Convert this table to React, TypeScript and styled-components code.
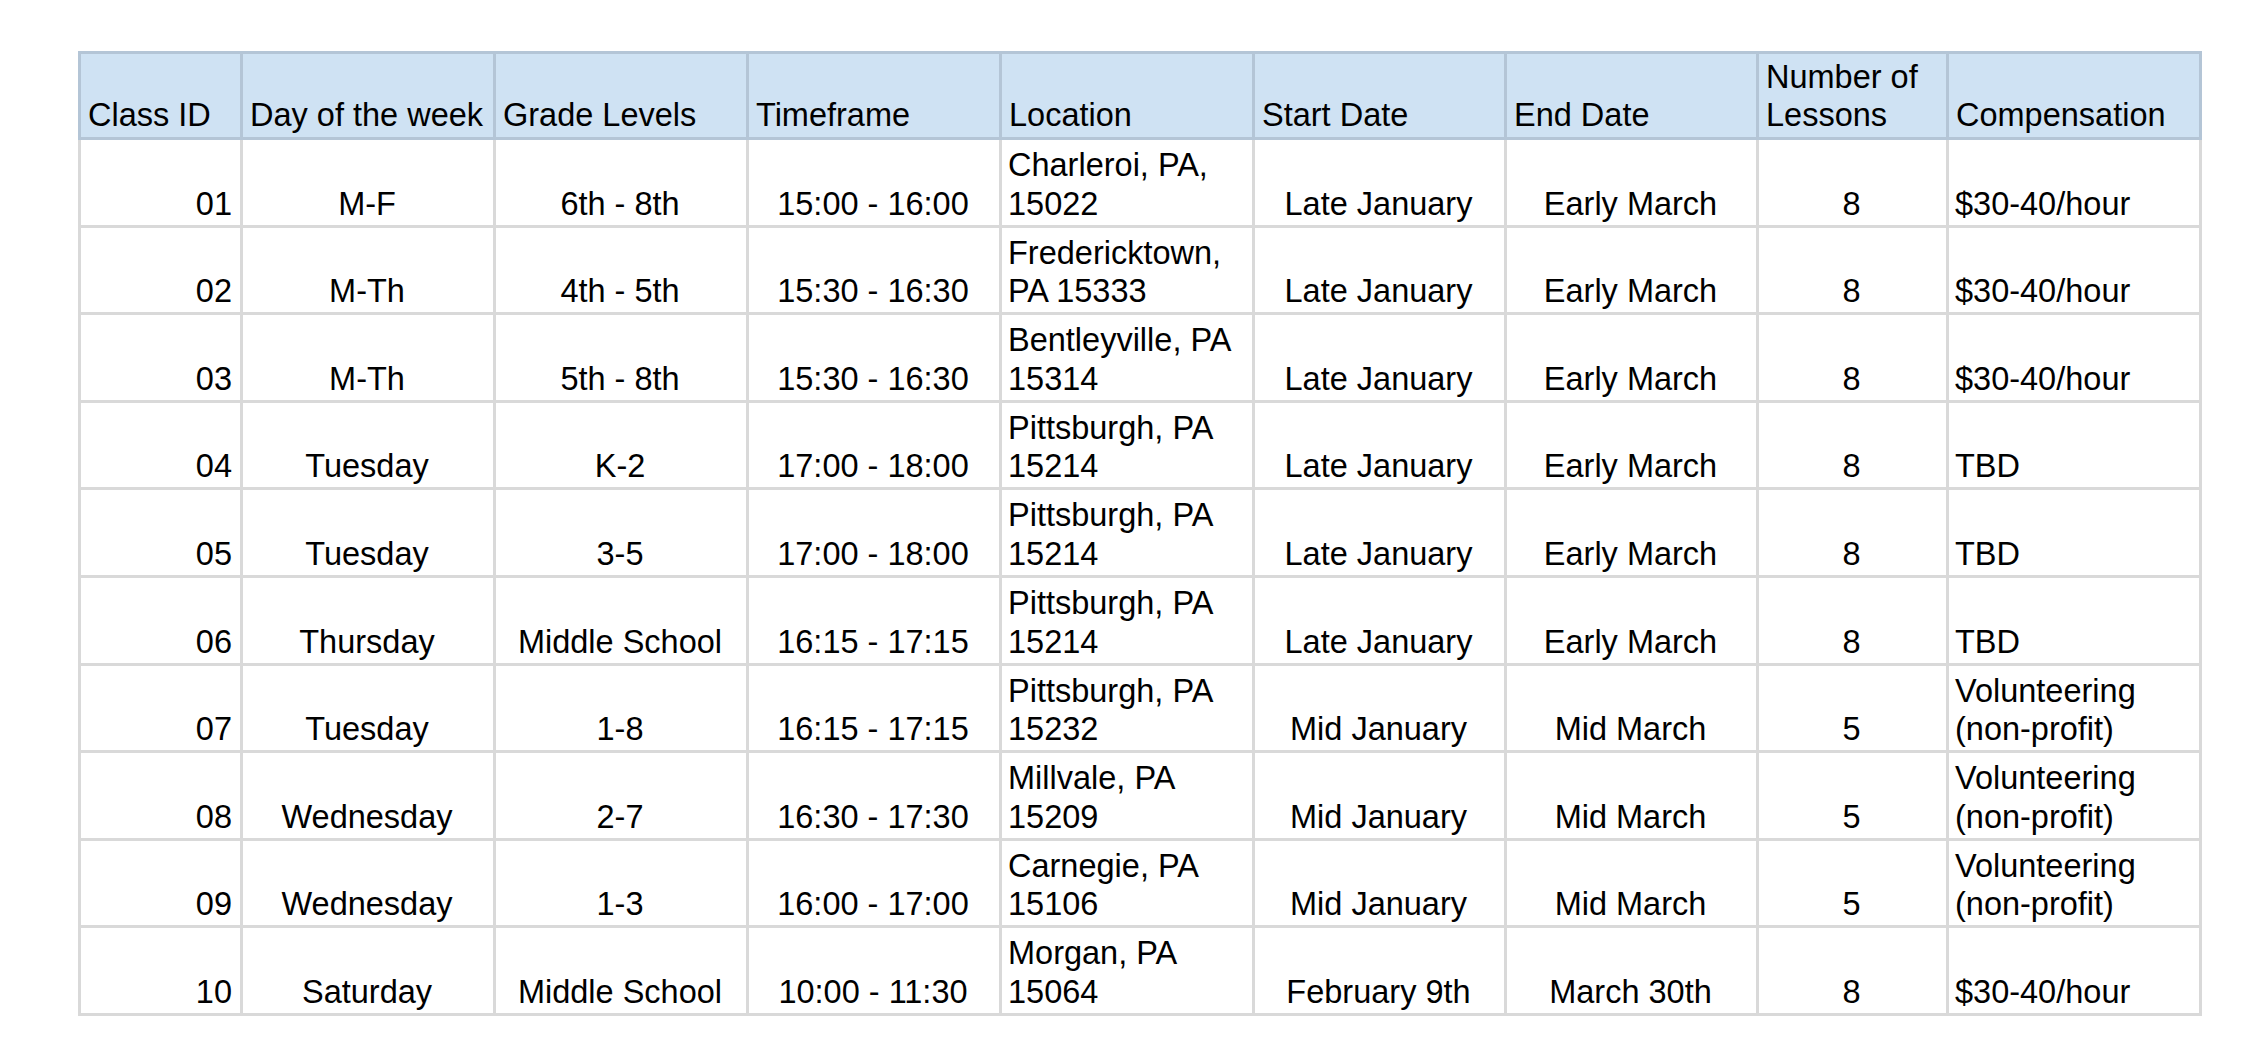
import React from 'react';
import styled, { createGlobalStyle } from 'styled-components';

const GlobalStyle = createGlobalStyle`
  html, body {
    margin: 0;
    padding: 0;
    background: #ffffff;
  }
  body {
    font-family: "Liberation Sans", Arial, sans-serif;
    color: #000000;
  }
`;

type Align = 'left' | 'center' | 'right';

interface ClassRow {
  id: string;
  day: string;
  grades: string;
  timeframe: string;
  location: string;
  start: string;
  end: string;
  lessons: number;
  pay: string;
}

const columns: { label: React.ReactNode; align: Align }[] = [
  { label: 'Class ID', align: 'right' },
  { label: 'Day of the week', align: 'center' },
  { label: 'Grade Levels', align: 'center' },
  { label: 'Timeframe', align: 'center' },
  { label: 'Location', align: 'left' },
  { label: 'Start Date', align: 'center' },
  { label: 'End Date', align: 'center' },
  { label: <>Number of<br />Lessons</>, align: 'center' },
  { label: 'Compensation', align: 'left' },
];

const rows: ClassRow[] = [
  { id: '01', day: 'M-F', grades: '6th - 8th', timeframe: '15:00 - 16:00', location: 'Charleroi, PA, 15022', start: 'Late January', end: 'Early March', lessons: 8, pay: '$30-40/hour' },
  { id: '02', day: 'M-Th', grades: '4th - 5th', timeframe: '15:30 - 16:30', location: 'Fredericktown, PA 15333', start: 'Late January', end: 'Early March', lessons: 8, pay: '$30-40/hour' },
  { id: '03', day: 'M-Th', grades: '5th - 8th', timeframe: '15:30 - 16:30', location: 'Bentleyville, PA 15314', start: 'Late January', end: 'Early March', lessons: 8, pay: '$30-40/hour' },
  { id: '04', day: 'Tuesday', grades: 'K-2', timeframe: '17:00 - 18:00', location: 'Pittsburgh, PA 15214', start: 'Late January', end: 'Early March', lessons: 8, pay: 'TBD' },
  { id: '05', day: 'Tuesday', grades: '3-5', timeframe: '17:00 - 18:00', location: 'Pittsburgh, PA 15214', start: 'Late January', end: 'Early March', lessons: 8, pay: 'TBD' },
  { id: '06', day: 'Thursday', grades: 'Middle School', timeframe: '16:15 - 17:15', location: 'Pittsburgh, PA 15214', start: 'Late January', end: 'Early March', lessons: 8, pay: 'TBD' },
  { id: '07', day: 'Tuesday', grades: '1-8', timeframe: '16:15 - 17:15', location: 'Pittsburgh, PA 15232', start: 'Mid January', end: 'Mid March', lessons: 5, pay: 'Volunteering (non-profit)' },
  { id: '08', day: 'Wednesday', grades: '2-7', timeframe: '16:30 - 17:30', location: 'Millvale, PA 15209', start: 'Mid January', end: 'Mid March', lessons: 5, pay: 'Volunteering (non-profit)' },
  { id: '09', day: 'Wednesday', grades: '1-3', timeframe: '16:00 - 17:00', location: 'Carnegie, PA 15106', start: 'Mid January', end: 'Mid March', lessons: 5, pay: 'Volunteering (non-profit)' },
  { id: '10', day: 'Saturday', grades: 'Middle School', timeframe: '10:00 - 11:30', location: 'Morgan, PA 15064', start: 'February 9th', end: 'March 30th', lessons: 8, pay: '$30-40/hour' },
];

const Page = styled.div`
  padding: 51px 0 0 78px;
`;

// column tracks include each cell's left rule; last one carries the right rule too
const Sheet = styled.div`
  display: grid;
  grid-template-columns: 162px 253px 253px 253px 253px 252px 252px 190px 256px;
  grid-template-rows: 89px repeat(10, 87.6px);
  width: max-content;
`;

const HeadCell = styled.div<{ $last?: boolean }>`
  box-sizing: border-box;
  display: flex;
  flex-direction: column;
  justify-content: flex-end;
  background: #cfe2f3;
  border-top: 3px solid #b4c5d6;
  border-bottom: 3px solid #b4c5d6;
  border-left: 3px solid #b4c5d6;
  border-right: ${p => (p.$last ? '3px solid #b4c5d6' : 'none')};
  padding: 0 2px 3.5px 7px;
  font-size: 32.5px;
  line-height: 38px;
  white-space: nowrap;
  overflow: hidden;
`;

const Cell = styled.div<{ $align: Align; $last?: boolean }>`
  box-sizing: border-box;
  display: flex;
  flex-direction: column;
  justify-content: flex-end;
  text-align: ${p => p.$align};
  border-left: 3px solid #d9d9d9;
  border-bottom: 3px solid #d9d9d9;
  border-right: ${p => (p.$last ? '3px solid #d9d9d9' : 'none')};
  padding: 0 8px 1.5px 6px;
  font-size: 32.5px;
  line-height: 38.5px;
  overflow: hidden;
`;

export default function App() {
  return (
    <>
      <GlobalStyle />
      <Page>
        <Sheet>
          {columns.map((c, i) => (
            <HeadCell key={i} $last={i === columns.length - 1}>
              <span>{c.label}</span>
            </HeadCell>
          ))}
          {rows.map((r) => {
            const values = [r.id, r.day, r.grades, r.timeframe, r.location, r.start, r.end, String(r.lessons), r.pay];
            return values.map((v, i) => (
              <Cell key={`${r.id}-${i}`} $align={columns[i].align} $last={i === values.length - 1}>
                <span>{v}</span>
              </Cell>
            ));
          })}
        </Sheet>
      </Page>
    </>
  );
}
